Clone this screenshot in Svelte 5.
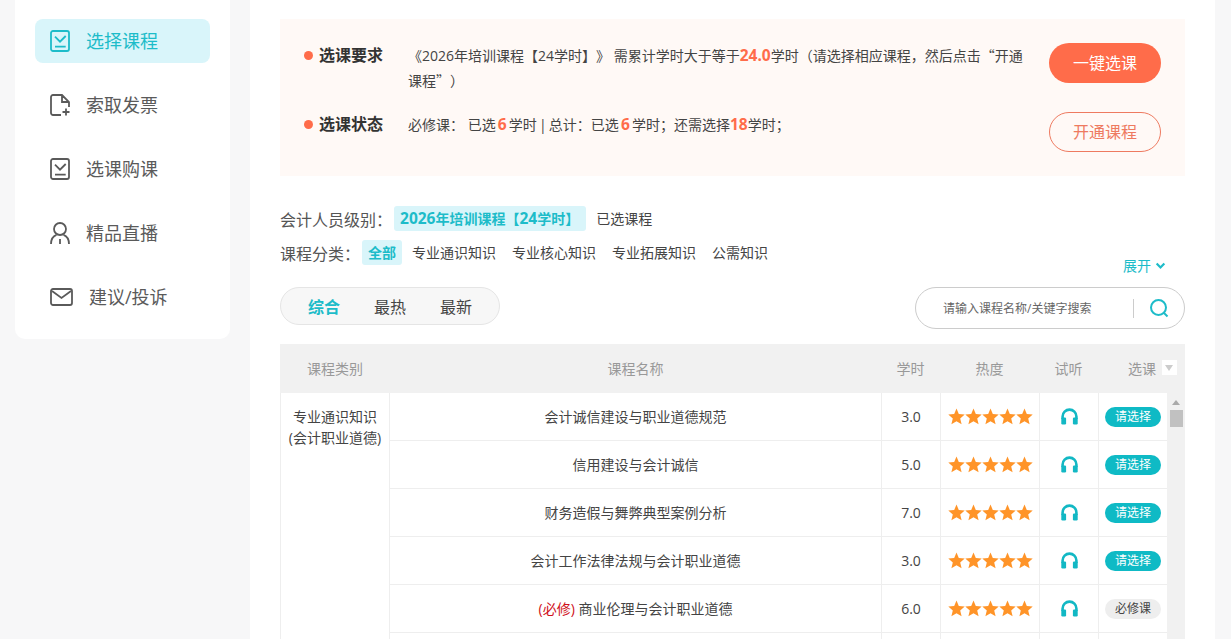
<script>
  const nav = [
    { label: '选择课程', icon: 'check', active: true },
    { label: '索取发票', icon: 'file' },
    { label: '选课购课', icon: 'check' },
    { label: '精品直播', icon: 'user' },
    { label: '建议/投诉', icon: 'mail' }
  ];
  const cats = ['专业通识知识', '专业核心知识', '专业拓展知识', '公需知识'];
  const rows = [
    { name: '会计诚信建设与职业道德规范', hours: '3.0' },
    { name: '信用建设与会计诚信', hours: '5.0' },
    { name: '财务造假与舞弊典型案例分析', hours: '7.0' },
    { name: '会计工作法律法规与会计职业道德', hours: '3.0' },
    { name: '商业伦理与会计职业道德', hours: '6.0', must: true },
    { name: '', hours: '', empty: true }
  ];
  const stars = [0, 1, 2, 3, 4];
</script>

<div class="page">
  <aside class="side">
    {#each nav as item}
      <div class="nav-item" class:active={item.active}>
        {#if item.icon === 'check'}
          <svg class="nav-icon" viewBox="0 0 20 22" fill="none" stroke="currentColor" stroke-width="1.800">
            <rect x="1" y="1" width="18" height="20" rx="2" />
            <path d="M5 6.700l5 5 5.700-5.700M5 16.700h10.700" />
          </svg>
        {:else if item.icon === 'file'}
          <svg class="nav-icon" viewBox="0 0 20 22" fill="none" stroke="currentColor" stroke-width="1.800">
            <path d="M11 21H3a2 2 0 0 1-2-2V3a2 2 0 0 1 2-2h9l7 7v5M12 1v7h7M16 14.500v7M12.500 18h7" />
          </svg>
        {:else if item.icon === 'user'}
          <svg class="nav-icon" viewBox="0 0 20 22" fill="none" stroke="currentColor" stroke-width="1.800">
            <circle cx="10" cy="7" r="6" />
            <path d="M1 22c0-4.500 2.300-8 5.500-9.200M19 22c0-4.500-2.300-8-5.500-9.200M10 17v5" />
          </svg>
        {:else}
          <svg class="nav-icon mail" viewBox="0 0 23 18" fill="none" stroke="currentColor" stroke-width="1.800">
            <rect x="1" y="1" width="21" height="16" rx="2" />
            <path d="M2 3l9.500 7L21 3" />
          </svg>
        {/if}
        <span class="nav-label">{item.label}</span>
      </div>
    {/each}
  </aside>

  <main class="main">
    <section class="notice">
      <div class="notice-rows">
        <div class="notice-row first">
          <span class="dot"></span>
          <h3>选课要求</h3>
          <p>《2026年培训课程【24学时】》 需累计学时大于等于<b>24.0</b>学时（请选择相应课程，然后点击<span class="cjk">“</span>开通课程<span class="cjk">”</span>）</p>
        </div>
        <div class="notice-row">
          <span class="dot"></span>
          <h3>选课状态</h3>
          <p class="status"><span class="lead">必修课：</span> 已选 <b>6</b> 学时 | 总计：已选 <b>6</b> 学时；还需选择<b>18</b>学时；</p>
        </div>
      </div>
      <div class="actions">
        <button class="btn solid">一键选课</button>
        <button class="btn ghost">开通课程</button>
      </div>
    </section>

    <div class="filter level">
      <span class="filter-label">会计人员级别：</span>
      <span class="level-tag"><span class="num">2026</span>年培训课程【<span class="num">24</span>学时】</span>
      <span class="picked">已选课程</span>
    </div>
    <div class="filter cats">
      <span class="filter-label">课程分类：</span>
      <span class="cat on">全部</span>
      {#each cats as c}<span class="cat">{c}</span>{/each}
    </div>
    <div class="more">
      展开
      <svg viewBox="0 0 10 10" fill="none" stroke="currentColor" stroke-width="2"><path d="M1.500 3.200 5 6.800l3.500-3.600" /></svg>
    </div>

    <div class="tools">
      <div class="sort">
        <span class="on">综合</span><span>最热</span><span>最新</span>
      </div>
      <div class="search">
        <span class="placeholder">请输入课程名称/关键字搜索</span>
        <i class="bar"></i>
        <svg viewBox="0 0 20 20" fill="none" stroke="currentColor" stroke-width="2"><circle cx="9.500" cy="9.500" r="7.500" /><path d="M15 15l3.500 3.500" /></svg>
      </div>
    </div>

    <div class="thead">
      <span>课程类别</span><span>课程名称</span><span>学时</span><span>热度</span><span>试听</span>
      <span class="th-pick">选课<i class="sort-box"></i></span>
    </div>
    <div class="tbody">
      <div class="col-cat">专业通识知识<br />(会计职业道德)</div>
      <div class="rows">
        {#each rows as r}
          <div class="row">
            <div class="cell name">
              {#if r.must}<em>(必修)</em>&nbsp;{/if}{r.name}
            </div>
            <div class="cell">{r.hours}</div>
            <div class="cell">
              {#if !r.empty}
                <svg class="stars" viewBox="0 0 85 17">
                  {#each stars as s}
                    <polygon transform="translate({s * 17} 0)" points="8.500,0.600 10.800,6 16.700,6.500 12.200,10.400 13.600,16.300 8.500,13.200 3.400,16.300 4.800,10.400 0.300,6.500 6.200,6" />
                  {/each}
                </svg>
              {/if}
            </div>
            <div class="cell">
              {#if !r.empty}
                <svg class="phones" viewBox="0 0 17 17">
                  <path d="M1.600 11V8.500a6.900 6.900 0 0 1 13.800 0V11" fill="none" stroke="currentColor" stroke-width="2.600" />
                  <rect x="0.300" y="9.500" width="4.800" height="7" rx="1.200" fill="currentColor" />
                  <rect x="11.900" y="9.500" width="4.800" height="7" rx="1.200" fill="currentColor" />
                </svg>
              {/if}
            </div>
            <div class="cell">
              {#if !r.empty}
                <span class="pill" class:must={r.must}>{r.must ? '必修课' : '请选择'}</span>
              {/if}
            </div>
          </div>
        {/each}
      </div>
      <div class="scroll"><i class="arrow"></i><i class="thumb"></i></div>
    </div>
  </main>
</div>

<style>
  :global(body) {
    margin: 0;
    height: 639px;
    overflow: hidden;
    background: #f7f7f8;
    font-family: "Open Sans", "Noto Sans CJK SC", sans-serif;
    color: #333;
    text-spacing-trim: space-all;
  }
  .page {
    display: flex;
    align-items: flex-start;
    gap: 20px;
    height: 649px;
    overflow: hidden;
    padding-left: 15px;
    margin-top: -10px;
  }
  .side {
    box-sizing: border-box;
    width: 215px;
    height: 349px;
    padding: 29px 20px 0;
    background: #fff;
    border-radius: 10px;
    display: flex;
    flex-direction: column;
    gap: 20px;
  }
  .nav-item {
    height: 44px;
    display: flex;
    align-items: center;
    padding-left: 15px;
    border-radius: 8px;
    color: #5a5a5a;
    font-size: 18px;
  }
  .nav-item.active {
    background: #d9f5fa;
    color: #1dbcc9;
  }
  .nav-icon { width: 20px; height: 22px; flex: none; }
  .nav-icon.mail { width: 23px; height: 18px; }
  .nav-label { margin-left: 16px; padding-bottom: 2px; }

  .main {
    box-sizing: border-box;
    width: 965px;
    height: 700px;
    padding: 29px 30px 0;
    background: #fff;
    border-radius: 10px;
  }
  .notice {
    box-sizing: border-box;
    height: 157px;
    background: #fff9f6;
    display: flex;
    justify-content: space-between;
    padding: 24px 24px 0;
  }
  .notice-rows { width: 722px; }
  .notice-row { display: flex; align-items: flex-start; }
  .notice-row.first { min-height: 69px; }
  .dot {
    flex: none;
    width: 9px;
    height: 9px;
    margin-top: 8px;
    border-radius: 50%;
    background: #ff6c4a;
  }
  h3 {
    flex: none;
    width: 89px;
    margin: 0 0 0 6px;
    font-size: 16px;
    line-height: 24px;
    font-weight: 700;
    color: #333;
  }
  p {
    margin: 0;
    font-size: 14px;
    line-height: 24px;
    color: #444;
  }
  .status { word-spacing: -1.500px; }
  .lead { margin-right: 1.500px; }
  .cjk { font-family: "Noto Sans CJK SC", sans-serif; }
  p b { color: #ff6c4a; font-size: 15.500px; font-weight: 700; }
  .actions { display: flex; flex-direction: column; gap: 29px; }
  .btn {
    width: 112px;
    height: 40px;
    border-radius: 20px;
    font: inherit;
    font-size: 16px;
    padding: 0 0 2px;
  }
  .btn.solid { background: #ff6c4a; border: 0; color: #fff; }
  .btn.ghost { background: transparent; border: 1px solid #ee7a60; color: #ee7a60; }

  .filter { display: flex; align-items: center; font-size: 14px; }
  .filter-label { font-size: 16px; color: #555; margin-right: 2px; }
  .level { margin-top: 30px; height: 25px; }
  .level-tag {
    height: 25px;
    line-height: 24px;
    padding: 0 7px 0 6px;
    border-radius: 3px;
    background: #d9f5fa;
    color: #1dbcc9;
    font-size: 14px;
    font-weight: 700;
  }
  .num { font-size: 15.500px; }
  .picked { margin-left: 10px; color: #444; padding-bottom: 1px; }
  .cats { margin-top: 9px; height: 25px; }
  .cat {
    height: 25px;
    line-height: 25px;
    padding: 0 6px;
    border-radius: 3px;
    color: #444;
  }
  .cat + .cat { margin-left: 4px; }
  .cat.on { background: #d9f5fa; color: #1dbcc9; font-weight: 700; }
  .more {
    display: flex;
    justify-content: flex-end;
    align-items: center;
    gap: 4px;
    height: 20px;
    margin: -10px 19px 0 0;
    font-size: 14px;
    color: #1dbcc9;
  }
  .more svg { width: 11px; height: 11px; }

  .tools {
    display: flex;
    justify-content: space-between;
    align-items: flex-start;
    margin-top: 12px;
  }
  .sort {
    box-sizing: border-box;
    width: 220px;
    height: 38px;
    padding-left: 27px;
    display: flex;
    align-items: center;
    gap: 34px;
    background: #f7f7f7;
    border: 1px solid #e5e5e5;
    border-radius: 19px;
    font-size: 16px;
    color: #444;
  }
  .sort .on { color: #1dbcc9; font-weight: 700; }
  .search {
    box-sizing: border-box;
    width: 270px;
    height: 42px;
    display: flex;
    align-items: center;
    padding-left: 27px;
    border: 1px solid #ccc;
    border-radius: 21px;
    font-size: 12px;
    color: #666;
  }
  .placeholder { width: 190px; flex: none; }
  .bar { width: 1px; height: 19px; background: #ccc; }
  .search svg { width: 20px; height: 20px; margin-left: 15px; color: #1dbcc9; }

  .thead {
    display: grid;
    grid-template-columns: 110px 491px 59px 99px 59px 87px;
    height: 49px;
    margin-top: 15px;
    padding-bottom: 1px;
    box-sizing: border-box;
    align-items: center;
    text-align: center;
    background: #f1f1f1;
    font-size: 14px;
    color: #999;
  }
  .th-pick {
    position: relative;
    text-align: left;
    padding-left: 30px;
  }
  .sort-box {
    position: absolute;
    left: 64px;
    top: 2px;
    width: 15px;
    height: 15px;
    background: #fff;
  }
  .sort-box::after {
    content: "";
    position: absolute;
    left: 3px;
    top: 5px;
    border-style: solid;
    border-width: 6px 4.500px 0;
    border-color: #ccc transparent transparent;
  }
  .tbody {
    display: flex;
    border-left: 1px solid #eee;
  }
  .col-cat {
    box-sizing: border-box;
    width: 109px;
    flex: none;
    padding-top: 13px;
    border-right: 1px solid #eee;
    text-align: center;
    font-size: 14px;
    line-height: 21px;
    color: #444;
  }
  .rows { width: 777px; flex: none; }
  .row {
    display: grid;
    grid-template-columns: 491px 59px 99px 59px 69px;
    height: 48px;
    box-sizing: border-box;
    border-bottom: 1px solid #eee;
  }
  .cell {
    display: flex;
    align-items: center;
    justify-content: center;
    font-size: 14px;
    color: #444;
  }
  .cell.name { padding-bottom: 2px; }
  .cell + .cell { border-left: 1px solid #eee; }
  em { font-style: normal; color: #d0111b; }
  .stars { width: 85px; height: 17px; fill: #ff9428; }
  .phones { width: 17px; height: 17px; color: #12b8c4; }
  .pill {
    width: 56px;
    height: 20px;
    line-height: 20px;
    text-align: center;
    border-radius: 10px;
    background: #0fbac5;
    color: #fff;
    font-size: 12px;
  }
  .pill.must { background: #eee; color: #444; }
  .scroll {
    position: relative;
    width: 18px;
    flex: none;
    background: #f1f1f1;
  }
  .arrow {
    position: absolute;
    left: 5px;
    top: 7px;
    border-style: solid;
    border-width: 0 4px 5px;
    border-color: transparent transparent #aaa;
  }
  .thumb {
    position: absolute;
    left: 3px;
    top: 17px;
    width: 13px;
    height: 17px;
    background: #c1c1c1;
  }
</style>
